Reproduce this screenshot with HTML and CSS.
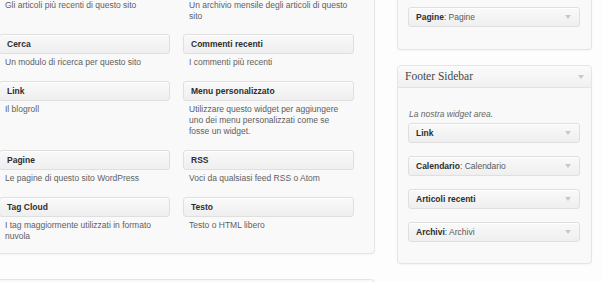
FILE: index.html
```html
<!DOCTYPE html>
<html lang="it">

<head>
	<meta charset="UTF-8">
	<title>Widget</title>
	<link rel="stylesheet" href="styles.css">
</head>

<body>
	<div class="screen">
		<div class="main-col">
			<div class="holder available">
				<div class="widget-list">
					<div class="widget first-row">
						<div class="widget-top"><h4>Articoli recenti</h4></div>
						<div class="widget-desc">Gli articoli più recenti di questo sito</div>
					</div>
					<div class="widget first-row">
						<div class="widget-top"><h4>Archivi</h4></div>
						<div class="widget-desc">Un archivio mensile degli articoli di questo sito</div>
					</div>
					<div class="widget">
						<div class="widget-top"><h4>Cerca</h4></div>
						<div class="widget-desc">Un modulo di ricerca per questo sito</div>
					</div>
					<div class="widget">
						<div class="widget-top"><h4>Commenti recenti</h4></div>
						<div class="widget-desc">I commenti più recenti</div>
					</div>
					<div class="widget">
						<div class="widget-top"><h4>Link</h4></div>
						<div class="widget-desc">Il blogroll</div>
					</div>
					<div class="widget">
						<div class="widget-top"><h4>Menu personalizzato</h4></div>
						<div class="widget-desc">Utilizzare questo widget per aggiungere uno dei menu personalizzati come se fosse un widget.</div>
					</div>
					<div class="widget">
						<div class="widget-top"><h4>Pagine</h4></div>
						<div class="widget-desc">Le pagine di questo sito WordPress</div>
					</div>
					<div class="widget">
						<div class="widget-top"><h4>RSS</h4></div>
						<div class="widget-desc">Voci da qualsiasi feed RSS o Atom</div>
					</div>
					<div class="widget">
						<div class="widget-top"><h4>Tag Cloud</h4></div>
						<div class="widget-desc">I tag maggiormente utilizzati in formato nuvola</div>
					</div>
					<div class="widget">
						<div class="widget-top"><h4>Testo</h4></div>
						<div class="widget-desc">Testo o HTML libero</div>
					</div>
				</div>
			</div>
			<div class="holder inactive"></div>
		</div>

		<div class="side-col">
			<div class="sidebar main-sidebar">
				<div class="sidebar-widgets">
					<div class="widget-top"><h4>Pagine<span class="in-title">: Pagine</span></h4><i class="arrow"></i></div>
				</div>
			</div>
			<div class="sidebar footer-sidebar">
				<div class="sidebar-name">
					<h3>Footer Sidebar</h3><i class="arrow"></i>
				</div>
				<div class="sidebar-description">La nostra widget area.</div>
				<div class="sidebar-widgets">
					<div class="widget-top"><h4>Link</h4><i class="arrow"></i></div>
					<div class="widget-top"><h4>Calendario<span class="in-title">: Calendario</span></h4><i class="arrow"></i></div>
					<div class="widget-top"><h4>Articoli recenti</h4><i class="arrow"></i></div>
					<div class="widget-top"><h4>Archivi<span class="in-title">: Archivi</span></h4><i class="arrow"></i></div>
				</div>
			</div>
		</div>
	</div>
</body>

</html>
```

FILE: styles.css
```css
html,
body {
	margin: 0;
	height: 100%;
	overflow: hidden;
}

body {
	background-color: #fdfdfd;
	color: #555;
	font-family: "Liberation Sans", Arial, sans-serif;
	font-size: 8.5px;
	line-height: 11px;
}

h3,
h4 {
	margin: 0;
}

.screen {
	display: flex;
	align-items: flex-start;
	margin-top: -24px;
}

/* available widgets */

.main-col {
	margin-left: -13px;
	width: 388px;
	flex: none;
}

.holder {
	box-sizing: border-box;
	background-color: #f9f9f9;
	border: 1px solid #e5e5e5;
	border-radius: 0 0 4px 4px;
	box-shadow: 0 1px 2px rgba(0, 0, 0, 0.04);
}

.available {
	border-top: 0;
	padding: 0 21px 11px 11px;
}

.inactive {
	margin-top: 25px;
	height: 40px;
	border-radius: 4px;
}

.widget-list {
	display: grid;
	grid-template-columns: 171px 171px;
	column-gap: 13px;
	row-gap: 13px;
	align-items: start;
}

.widget.first-row {
	margin-bottom: -1px;
}

.widget.first-row .widget-desc {
	margin-top: 4px;
}

.widget-desc {
	margin-top: 3px;
	padding-left: 6px;
	padding-right: 6px;
	color: #606060;
}

.widget-top {
	box-sizing: border-box;
	height: 20px;
	display: flex;
	align-items: center;
	justify-content: space-between;
	padding: 0 8px 0 7px;
	background: linear-gradient(to bottom, #f9f9f9, #efefef);
	border: 1px solid #dfdfdf;
	border-radius: 3px;
	box-shadow: 0 1px 0 #fff inset;
}

.widget-top h4 {
	font-size: 8.5px;
	font-weight: bold;
	color: #2e2e2e;
	white-space: nowrap;
}

.widget-top .in-title {
	font-weight: normal;
	color: #5a5a5a;
}

.arrow {
	width: 0;
	height: 0;
	border-left: 3px solid transparent;
	border-right: 3px solid transparent;
	border-top: 4px solid #c8c8c8;
}

/* sidebars */

.side-col {
	margin-left: 22px;
	width: 195px;
	flex: none;
}

.sidebar {
	box-sizing: border-box;
	background-color: #f9f9f9;
	border: 1px solid #e5e5e5;
	border-radius: 4px;
	box-shadow: 0 1px 2px rgba(0, 0, 0, 0.04);
}

.main-sidebar {
	border-top: 0;
	border-radius: 0 0 4px 4px;
	padding: 31px 11px 22px 10px;
}

.footer-sidebar {
	margin-top: 15px;
	padding-bottom: 21px;
}

.sidebar-name {
	box-sizing: border-box;
	height: 22px;
	display: flex;
	align-items: center;
	justify-content: space-between;
	padding: 0 7px 0 7px;
	background: linear-gradient(to bottom, #fbfbfb, #f0f0f0);
	border-bottom: 1px solid #e3e3e3;
	border-radius: 4px 4px 0 0;
}

.sidebar-name h3 {
	font-family: "Liberation Serif", Georgia, serif;
	font-size: 11.5px;
	font-weight: normal;
	color: #464646;
}

.sidebar-description {
	padding: 21px 10px 3px 11px;
	font-style: italic;
	color: #666;
}

.footer-sidebar .sidebar-widgets {
	display: flex;
	flex-direction: column;
	gap: 13px;
	padding: 0 11px 0 10px;
}
```
